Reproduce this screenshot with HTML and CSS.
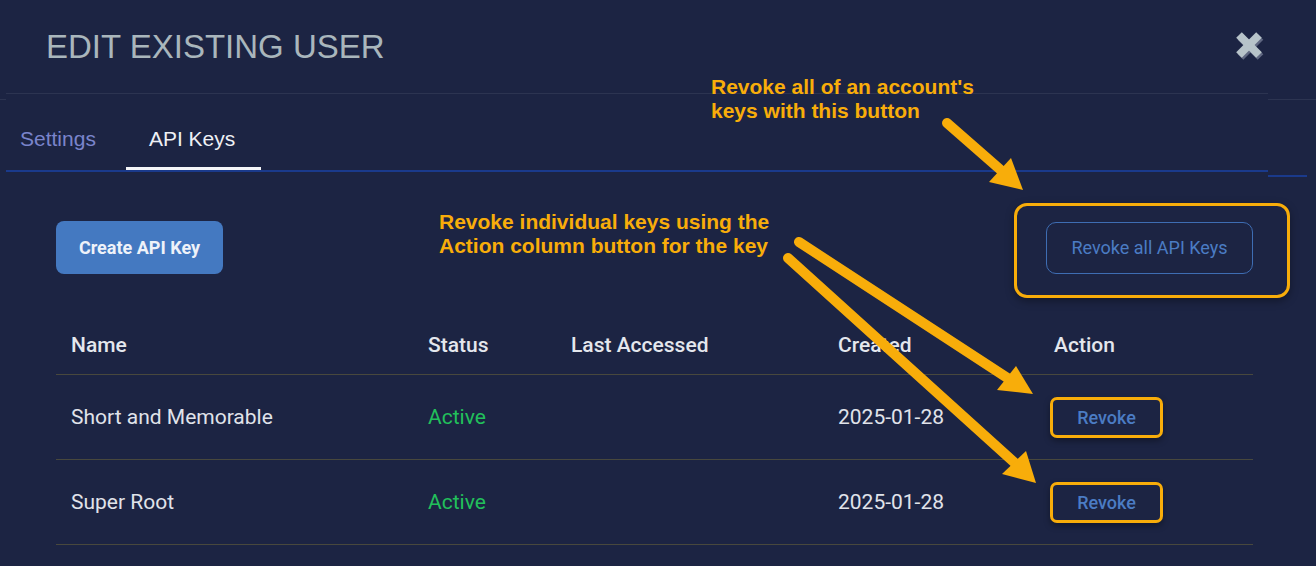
FILE: index.html
```html
<!DOCTYPE html>
<html lang="en">
<head>
<meta charset="utf-8">
<title>Edit Existing User</title>
<link rel="stylesheet" href="styles.css">
</head>
<body>
<div class="modal">
  <header class="modal-header">
    <h1 class="modal-title">EDIT EXISTING USER</h1>
    <button class="close-btn" aria-label="Close">
      <svg width="30" height="30" viewBox="0 0 30 30">
        <g stroke="#5f6781" stroke-width="8" transform="translate(1.5 2)">
          <line x1="4" y1="4" x2="24" y2="24"/>
          <line x1="24" y1="4" x2="4" y2="24"/>
        </g>
        <g stroke="#b7c3c9" stroke-width="8">
          <line x1="4" y1="4" x2="24" y2="24"/>
          <line x1="24" y1="4" x2="4" y2="24"/>
        </g>
      </svg>
    </button>
  </header>

  <nav class="tabs">
    <div class="tab">Settings</div>
    <div class="tab active">API Keys</div>
  </nav>

  <section class="content">
    <div class="toolbar">
      <button class="btn-primary">Create API Key</button>
      <div class="highlight">
        <button class="btn-outline">Revoke all API Keys</button>
      </div>
    </div>

    <div class="table">
      <div class="row head">
        <div class="cell">Name</div>
        <div class="cell">Status</div>
        <div class="cell">Last Accessed</div>
        <div class="cell">Created</div>
        <div class="cell">Action</div>
      </div>
      <div class="row">
        <div class="cell">Short and Memorable</div>
        <div class="cell status">Active</div>
        <div class="cell"></div>
        <div class="cell">2025-01-28</div>
        <div class="cell"><button class="btn-revoke">Revoke</button></div>
      </div>
      <div class="row">
        <div class="cell">Super Root</div>
        <div class="cell status">Active</div>
        <div class="cell"></div>
        <div class="cell">2025-01-28</div>
        <div class="cell"><button class="btn-revoke">Revoke</button></div>
      </div>
    </div>
  </section>
</div>

<div class="note note-all">Revoke all of an account's<br>keys with this button</div>
<div class="note note-each">Revoke individual keys using the<br>Action column button for the key</div>

<svg class="arrows" width="1316" height="566" viewBox="0 0 1316 566">
  <g stroke="#f8ad0a" stroke-width="10" stroke-linecap="round">
    <line x1="947" y1="123" x2="1003" y2="172"/>
    <line x1="799" y1="242" x2="1009" y2="379"/>
    <line x1="788" y1="258" x2="1016" y2="464"/>
  </g>
  <g fill="#f8ad0a">
    <polygon points="1011,158 1023,190 989,182"/>
    <polygon points="1016,366 1033,394 997,390"/>
    <polygon points="1026,451 1036,483 1002,474"/>
  </g>
</svg>
</body>
</html>
```

FILE: styles.css
```css
* { box-sizing: border-box; }

html, body {
  margin: 0;
  padding: 0;
  background: #1c2443;
}

body {
  width: 1316px;
  height: 566px;
  overflow: hidden;
  position: relative;
  font-family: Roboto, "Liberation Sans", sans-serif;
}

.modal {
  width: 1316px;
}

.modal-header {
  height: 94px;
  margin: 0 48px 0 6px;
  padding: 30px 3px 0 40px;
  border-bottom: 1px solid #2c3451;
  display: flex;
  justify-content: space-between;
  align-items: flex-start;
  position: relative;
}

.modal-header::before,
.modal-header::after {
  content: "";
  position: absolute;
  bottom: -7px;
  height: 1px;
  background: #2c3451;
}
.modal-header::before { left: -6px; width: 6px; }
.modal-header::after { right: -48px; width: 48px; }

.modal-title {
  margin: 0;
  font-family: "Liberation Sans", Arial, sans-serif;
  font-weight: normal;
  font-size: 33px;
  line-height: 33px;
  color: #a9b6bc;
  letter-spacing: 0;
}

.close-btn {
  border: none;
  background: none;
  padding: 0;
  margin-top: 1px;
  width: 30px;
  height: 30px;
  display: flex;
}

.tabs {
  display: flex;
  gap: 16px;
  height: 78px;
  margin: 0 48px 0 6px;
  border-bottom: 2px solid #1a3a8c;
  position: relative;
}

.tabs::after {
  content: "";
  position: absolute;
  right: -39px;
  bottom: -7px;
  width: 39px;
  height: 2px;
  background: #1a3a8c;
}

.tab {
  height: 76px;
  padding: 16px 14px 0;
  display: flex;
  align-items: center;
  font-family: "Liberation Sans", Arial, sans-serif;
  font-size: 21px;
  color: #7a84cc;
  border-bottom: 3px solid transparent;
}

.tab.active {
  padding: 16px 26px 0 23px;
  color: #eef0f5;
  border-bottom-color: #f4f5f8;
}

.content {
  padding: 49px 63px 0 56px;
}

.toolbar {
  display: flex;
  justify-content: space-between;
  align-items: center;
}

.btn-primary {
  width: 167px;
  height: 53px;
  padding: 0;
  border: none;
  border-radius: 8px;
  background: #4479c1;
  color: #eef2f9;
  font-family: Roboto, sans-serif;
  font-size: 18px;
  font-weight: 700;
}

.highlight {
  margin: -19px -37px -24px 0;
  padding: 16px 34px 21px 29px;
  border: 3px solid #f8ad0a;
  border-radius: 13px;
  box-shadow: 0 3px 8px rgba(0, 0, 0, 0.35);
}

.btn-outline {
  display: block;
  width: 207px;
  height: 52px;
  border: 1px solid #3e6db3;
  border-radius: 10px;
  background: transparent;
  color: #4b7cc4;
  font-family: Roboto, sans-serif;
  font-size: 18px;
  font-weight: 400;
}

.table {
  margin-top: 41px;
}

.row {
  display: grid;
  grid-template-columns: 357px 143px 267px 216px 214px;
  height: 85px;
  border-bottom: 1px solid #48483d;
  align-items: center;
}

.row.head {
  height: 60px;
}

.cell {
  padding-left: 15px;
  font-size: 21px;
  color: #e0e3ea;
  white-space: nowrap;
}

.head .cell {
  font-weight: 500;
  color: #e4e7ed;
}

.status {
  color: #22c05b;
}

.cell .btn-revoke {
  margin-left: -4px;
}

.btn-revoke {
  width: 113px;
  height: 41px;
  border: 3px solid #f8ad0a;
  border-radius: 7px;
  background: transparent;
  color: #4b7cc4;
  font-family: Roboto, sans-serif;
  font-size: 18px;
  font-weight: 500;
  box-shadow: 0 3px 6px rgba(0, 0, 0, 0.35);
}

.note {
  position: absolute;
  font-family: "Liberation Sans", Arial, sans-serif;
  font-weight: bold;
  font-size: 21px;
  line-height: 24px;
  color: #f8ad0a;
  white-space: nowrap;
}

.note-all { left: 711px; top: 75px; }
.note-each { left: 439px; top: 210px; }

.arrows {
  position: absolute;
  left: 0;
  top: 0;
  pointer-events: none;
}
```
